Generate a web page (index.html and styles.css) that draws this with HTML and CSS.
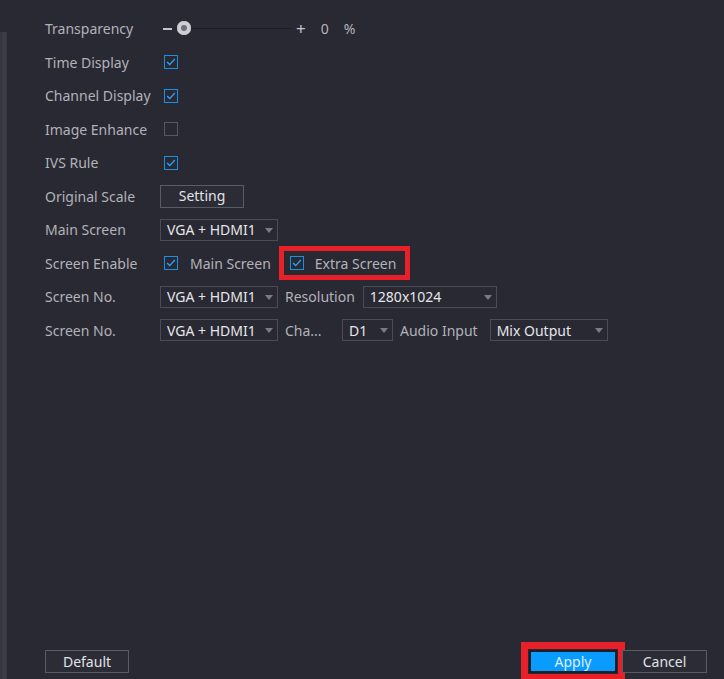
FILE: index.html
```html
<!DOCTYPE html>
<html>
<head>
<meta charset="utf-8">
<link rel="stylesheet" href="styles.css">
</head>
<body>
<div class="page">
  <div class="edge"></div>
  <div class="panel">
    <div class="rows">
      <div class="row">
        <span class="label">Transparency</span>
        <div class="slider">
          <span class="minus"></span>
          <span class="track"><span class="knob"></span></span>
          <span class="plus">+</span>
          <span class="val">0</span>
          <span class="unit">%</span>
        </div>
      </div>
      <div class="row">
        <span class="label">Time Display</span>
        <span class="cb on"><svg viewBox="0 0 14 14"><polyline points="2.5,7 5.5,10 11.5,3.5"/></svg></span>
      </div>
      <div class="row">
        <span class="label">Channel Display</span>
        <span class="cb on"><svg viewBox="0 0 14 14"><polyline points="2.5,7 5.5,10 11.5,3.5"/></svg></span>
      </div>
      <div class="row">
        <span class="label">Image Enhance</span>
        <span class="cb"></span>
      </div>
      <div class="row">
        <span class="label">IVS Rule</span>
        <span class="cb on"><svg viewBox="0 0 14 14"><polyline points="2.5,7 5.5,10 11.5,3.5"/></svg></span>
      </div>
      <div class="row">
        <span class="label">Original Scale</span>
        <button class="btn setting">Setting</button>
      </div>
      <div class="row">
        <span class="label">Main Screen</span>
        <span class="sel w118">VGA + HDMI1<i class="arrow"></i></span>
      </div>
      <div class="row">
        <span class="label">Screen Enable</span>
        <span class="cb on"><svg viewBox="0 0 14 14"><polyline points="2.5,7 5.5,10 11.5,3.5"/></svg></span>
        <span class="opt">Main Screen</span>
        <span class="hl">
          <span class="cb on"><svg viewBox="0 0 14 14"><polyline points="2.5,7 5.5,10 11.5,3.5"/></svg></span>
          <span class="opt">Extra Screen</span>
        </span>
      </div>
      <div class="row">
        <span class="label">Screen No.</span>
        <span class="sel w118">VGA + HDMI1<i class="arrow"></i></span>
        <span class="label2">Resolution</span>
        <span class="sel w134">1280x1024<i class="arrow"></i></span>
      </div>
      <div class="row">
        <span class="label">Screen No.</span>
        <span class="sel w118">VGA + HDMI1<i class="arrow"></i></span>
        <span class="label2 cha">Cha...</span>
        <span class="sel w51">D1<i class="arrow"></i></span>
        <span class="label2 audio">Audio Input</span>
        <span class="sel w118 mix">Mix Output<i class="arrow"></i></span>
      </div>
    </div>
    <div class="footer">
      <button class="btn default">Default</button>
      <div class="right">
        <button class="btn apply">Apply</button>
        <button class="btn cancel">Cancel</button>
      </div>
    </div>
  </div>
</div>
</body>
</html>
```

FILE: styles.css
```css
* { box-sizing: border-box; }
html, body {
  margin: 0;
  padding: 0;
  height: 100%;
}
body {
  background: #292933;
  font-family: "Noto Sans", "Open Sans", sans-serif;
  font-size: 14px;
  color: #b2b2b8;
  overflow: hidden;
}
.page {
  display: flex;
  height: 679px;
}
.edge {
  width: 7px;
  margin-top: 32px;
  background: linear-gradient(to right, #33343e 0%, #3d3e48 60%, #353640 100%);
}
.panel {
  flex: 1;
  display: flex;
  flex-direction: column;
  padding-left: 38px;
  padding-top: 12px;
  padding-bottom: 6px;
}
.rows {
  display: flex;
  flex-direction: column;
}
.row {
  height: 33.5px;
  display: flex;
  align-items: center;
  white-space: nowrap;
}
.label {
  width: 115px;
  flex: none;
}
.label.wide { letter-spacing: 0.3px; }
.label2 {
  margin-left: 7px;
  margin-right: 8px;
}
.label2.cha { width: 50px; margin-right: 7px; }
.label2.audio { margin-right: 12px; }

/* slider */
.slider {
  display: flex;
  align-items: center;
  height: 20px;
}
.minus {
  width: 9px;
  height: 2px;
  background: #c4c4c8;
  margin-left: 3px;
}
.track {
  position: relative;
  width: 115px;
  height: 1px;
  background: #1e1e26;
  margin-left: 4px;
}
.knob {
  position: absolute;
  left: 1px;
  top: -7px;
  width: 14px;
  height: 14px;
  border-radius: 50%;
  background: #cfcfd3;
  box-shadow: inset 0 0 0 4px #cfcfd3, inset 0 0 0 7px #6e6e76;
}
.plus {
  color: #c4c4c8;
  font-size: 17px;
  margin-left: 5px;
  line-height: 1;
}
.val { margin-left: 15px; color: #b4b4ba; }
.unit { margin-left: 15px; color: #b4b4ba; }

/* checkbox */
.cb {
  width: 14px;
  height: 14px;
  border: 1px solid #56575f;
  margin-left: 4px;
  flex: none;
  display: inline-flex;
}
.cb.on { border-color: #1b8fe0; }
.cb svg {
  width: 12px;
  height: 12px;
}
.cb svg polyline {
  fill: none;
  stroke: #2ea4ff;
  stroke-width: 1.5;
}
.opt {
  margin-left: 12px;
}
.hl {
  display: inline-flex;
  align-items: center;
  margin-left: 8px;
  border: 5px solid #e8202a;
  padding: 0 9px 0 2px;
  height: 34px;
}
.hl .cb { margin-left: 4px; }
.hl .opt { margin-left: 11px; }

/* buttons */
.btn {
  font-family: "Noto Sans", "Open Sans", sans-serif;
  font-size: 14px;
  color: #e2e2e6;
  background: #2c2c36;
  border: 1px solid #5a5b64;
  height: 23px;
  padding: 0;
  line-height: 20px;
  cursor: pointer;
}
.setting {
  width: 84px;
}

/* selects */
.sel {
  position: relative;
  height: 22px;
  border: 1px solid #4a4b55;
  color: #e6e6ea;
  padding-left: 6px;
  display: inline-flex;
  align-items: center;
  flex: none;
}
.w118 { width: 118px; }
.w134 { width: 134px; }
.w51 { width: 51px; }
.arrow {
  position: absolute;
  right: 4px;
  top: 8px;
  width: 0;
  height: 0;
  border-left: 4px solid transparent;
  border-right: 4px solid transparent;
  border-top: 5px solid #7b7b84;
}

/* footer */
.footer {
  margin-top: auto;
  display: flex;
  align-items: center;
  justify-content: space-between;
  padding-right: 17px;
}
.default { width: 84px; }
.right {
  display: flex;
  align-items: center;
  gap: 5px;
}
.apply {
  width: 88px;
  background: #0a9bff;
  border: 2px solid #1d1d26;
  color: #dff0ff;
  outline: 7px solid #e8202a;
  outline-offset: 1px;
}
.cancel {
  width: 85px;
}
```
